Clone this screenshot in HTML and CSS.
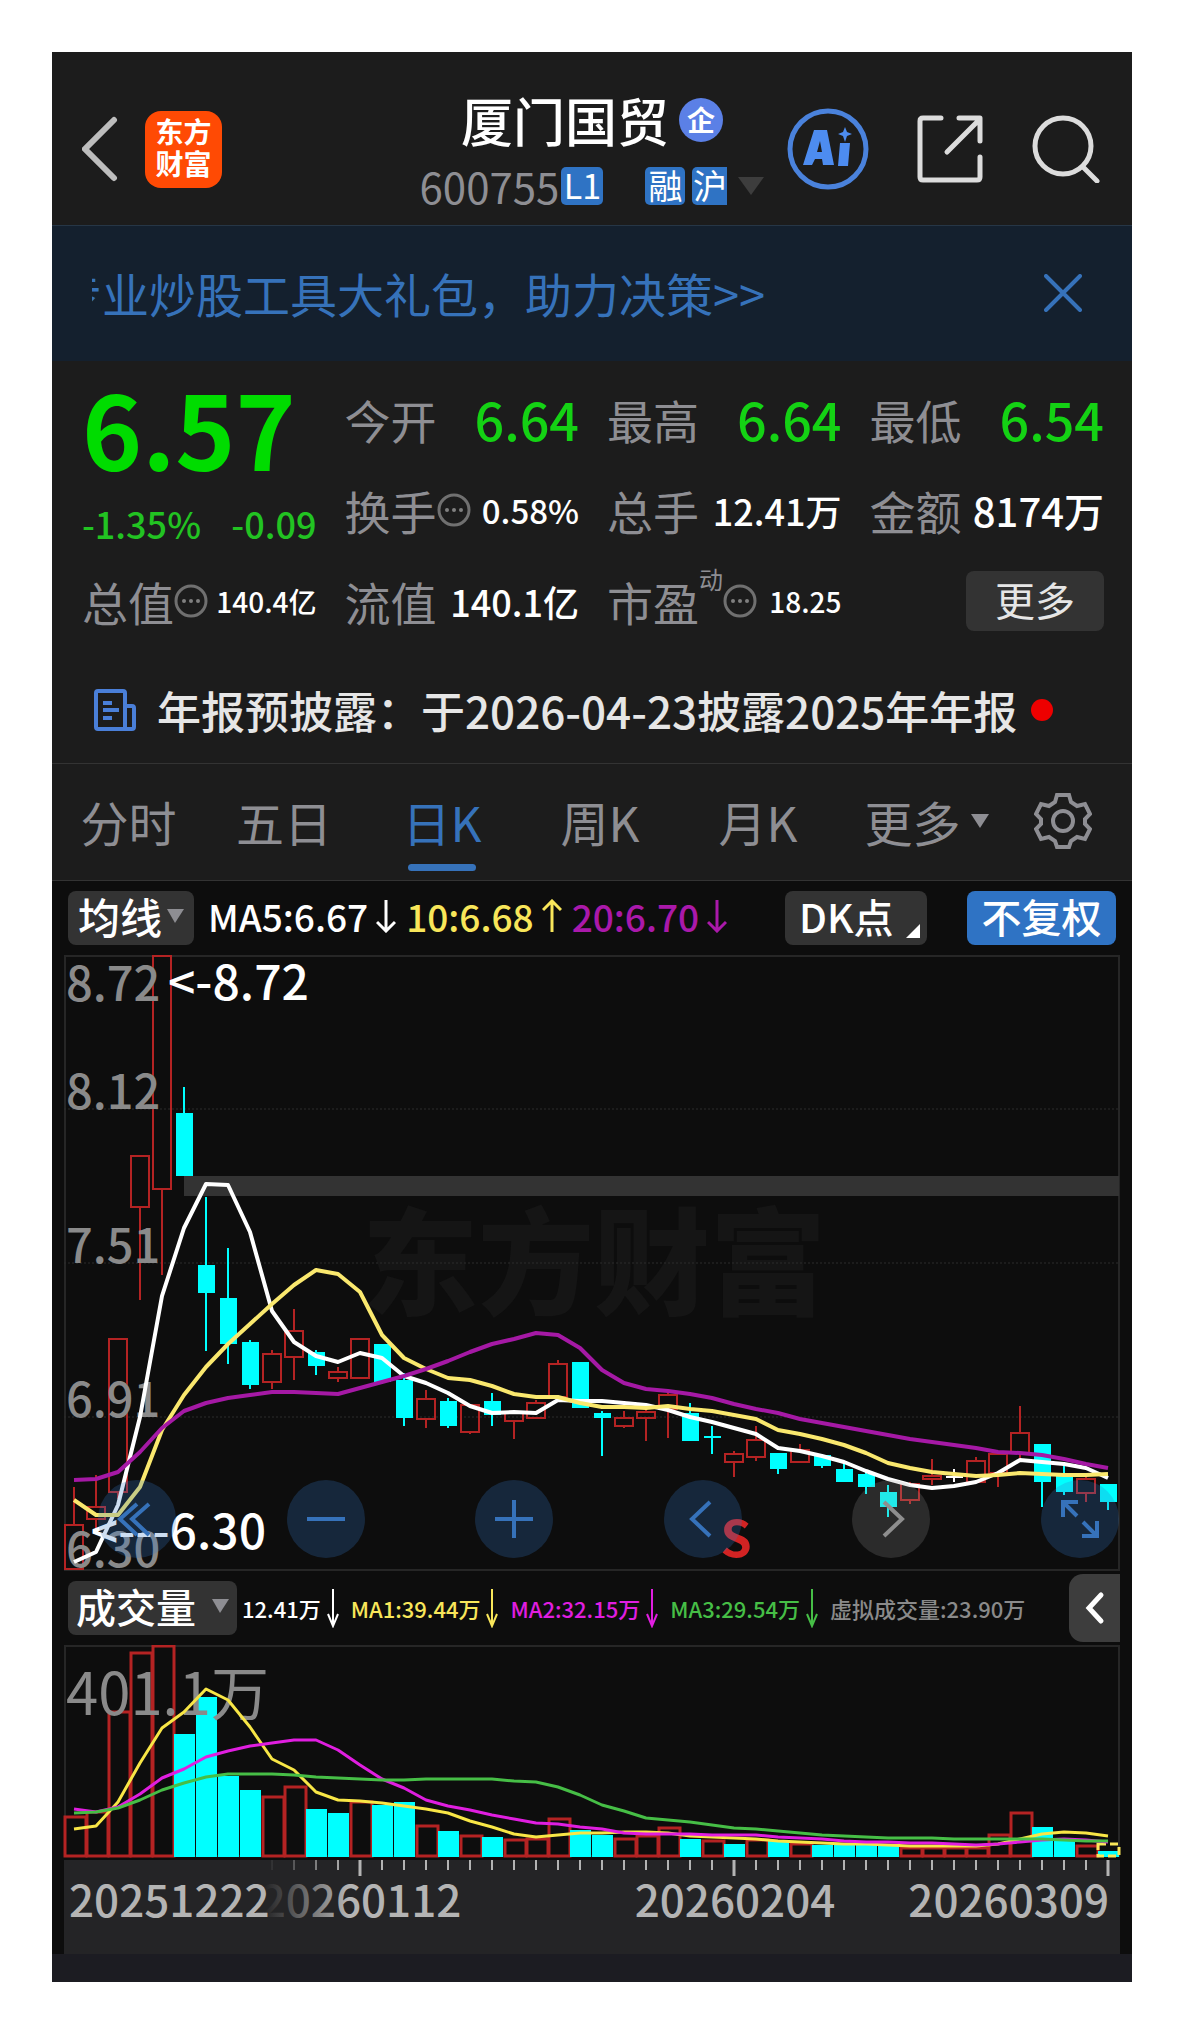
FILE: index.html
```html
<!DOCTYPE html>
<html lang="zh-CN">
<head>
    <meta charset="UTF-8">
    <meta name="viewport" content="width=device-width, initial-scale=1.0">
    <title>厦门国贸 600755</title>
    <link rel="stylesheet" href="styles.css">
</head>
<body>
    <main class="screen">
        <header class="header">
            <div class="header-left">
                <button class="icon-button" aria-label="返回">
                    <svg width="37" height="66" viewBox="3 0 37 66"><path d="M35 4 6 33l29 29" fill="none" stroke="#bdbdbd" stroke-width="6" stroke-linecap="round"/></svg>
                </button>
                <div class="logo"><span>东方</span><span>财富</span></div>
            </div>
            <div class="stock">
                <h1 class="stock-name">厦门国贸<span class="company-badge">企</span></h1>
                <div class="stock-meta">
                    <span class="stock-code">600755</span>
                    <span class="tag tag-level">L1</span>
                    <span class="tag">融</span>
                    <span class="tag tag-cut">沪</span>
                    <svg class="meta-caret" width="26" height="18" viewBox="0 0 26 18"><path d="M0 0h26L13 18z" fill="#3d3d3d"/></svg>
                </div>
            </div>
            <div class="header-actions">
                <button class="icon-button" aria-label="AI">
                    <svg width="82" height="82" viewBox="0 0 82 82">
                        <circle cx="41" cy="41" r="38" fill="none" stroke="#4a82dc" stroke-width="5"/>
                        <path fill="#4d8cf0" fill-rule="evenodd" d="M27 22h13l7 35H36l-1-6h-7l-3 6H16zM33 33l-3 11h5zM53 35h10l-2 23H51zM58 19l2 5 5 2-5 2-2 6-2-6-5-2 5-2z"/>
                    </svg>
                </button>
                <button class="icon-button" aria-label="分享">
                    <svg width="66" height="68" viewBox="0 0 66 68" fill="none" stroke="#dcdcdc" stroke-width="5" stroke-linecap="round" stroke-linejoin="round"><path d="M24 3H6q-3 0-3 3v56q0 3 3 3h54q3 0 3-3V42M42 3h21v23M62 5 30 37"/></svg>
                </button>
                <button class="icon-button" aria-label="搜索">
                    <svg width="71" height="68" viewBox="0 0 71 68" fill="none" stroke="#dcdcdc" stroke-width="5" stroke-linecap="round"><circle cx="32" cy="31" r="28"/><path d="m53 53 13 13"/></svg>
                </button>
            </div>
        </header>

        <div class="banner">
            <a class="banner-text" href="#">专业炒股工具大礼包，助力决策&gt;&gt;</a>
            <button class="icon-button" aria-label="关闭">
                <svg width="38" height="38" viewBox="0 0 38 38"><path d="m2 2 34 34M36 2 2 36" stroke="#3672ba" stroke-width="4" stroke-linecap="round"/></svg>
            </button>
        </div>

        <section class="quote">
            <div class="price">
                <div class="price-last">6.57</div>
                <div class="price-change"><span>-1.35%</span><span>-0.09</span></div>
            </div>
            <div class="cell"><span class="label">今开</span><span class="value value-large down">6.64</span></div>
            <div class="cell"><span class="label">最高</span><span class="value value-large down">6.64</span></div>
            <div class="cell"><span class="label">最低</span><span class="value value-large down">6.54</span></div>
            <div class="cell"><span class="label">换手</span><svg class="info" viewBox="0 0 34 34"><use href="#info-icon"/></svg><span class="value value-medium">0.58%</span></div>
            <div class="cell"><span class="label">总手</span><span class="value">12.41万</span></div>
            <div class="cell"><span class="label">金额</span><span class="value value-wide">8174万</span></div>
            <div class="cell"><span class="label">总值</span><svg class="info" viewBox="0 0 34 34"><use href="#info-icon"/></svg><span class="value value-small">140.4亿</span></div>
            <div class="cell"><span class="label">流值</span><span class="value">140.1亿</span></div>
            <div class="cell"><span class="label">市盈</span><span class="label-sup">动</span><svg class="info" viewBox="0 0 34 34"><use href="#info-icon"/></svg><span class="value value-small">18.25</span></div>
            <div class="cell"><button class="more-button">更多</button></div>
        </section>

        <a class="notice" href="#">
            <svg width="42" height="42" viewBox="0 0 42 42" fill="none" stroke="#4a7fd8" stroke-width="4" stroke-linejoin="round"><path d="M31 40H4q-2 0-2-2V4q0-2 2-2h25q2 0 2 2zM31 17h7q2 0 2 2v19q0 2-2 2h-7M9 14h9M9 21h16M9 29h9"/></svg>
            <span class="notice-text">年报预披露：于2026-04-23披露2025年年报</span>
            <span class="notice-dot"></span>
        </a>

        <nav class="tabs">
            <button class="tab">分时</button>
            <button class="tab">五日</button>
            <button class="tab active">日K</button>
            <button class="tab">周K</button>
            <button class="tab">月K</button>
            <button class="tab">更多<svg class="tab-caret" width="18" height="14" viewBox="0 0 18 14"><path d="M0 0h18L9 14z" fill="#8e8e93"/></svg></button>
            <button class="tab" aria-label="设置">
                <svg width="58" height="58" viewBox="0 0 58 58" fill="none" stroke="#8e8e93" stroke-width="4"><path d="M23 3h12l2 7 6 4 8-2 5 10-5 5v5l5 5-5 10-8-2-6 4-2 6H23l-2-6-6-4-8 2-5-10 5-5v-5l-5-5 5-10 8 2 6-4z"/><circle cx="29" cy="29" r="10"/></svg>
            </button>
        </nav>

        <section class="chart">
            <div class="indicator-bar">
                <button class="chip">均线<svg width="17" height="14" viewBox="0 0 17 14"><path d="M0 0h17L8 14z" fill="#8e8e93"/></svg></button>
                <div class="averages">
                    <span class="average">MA5:6.67<svg class="arrow" viewBox="0 0 20 34"><use href="#arrow-down"/></svg></span>
                    <span class="average yellow">10:6.68<svg class="arrow" viewBox="0 0 20 34"><use href="#arrow-up"/></svg></span>
                    <span class="average purple">20:6.70<svg class="arrow" viewBox="0 0 20 34"><use href="#arrow-down"/></svg></span>
                </div>
                <button class="chip chip-dk">DK点<svg class="chip-corner" width="14" height="14" viewBox="0 0 14 14"><path d="M14 0v14H0z" fill="#fff"/></svg></button>
                <button class="chip chip-blue">不复权</button>
            </div>

            <div class="price-area">
                <svg class="plot" id="price-chart" viewBox="52 955 1080 616"></svg>
                <div class="chart-controls">
                    <button class="round" aria-label="最早"><svg viewBox="0 0 78 78"><path d="M39 24 22 39l17 16M51 24 34 39l17 16"/></svg></button>
                    <button class="round" aria-label="缩小"><svg viewBox="0 0 78 78"><path d="M20 39h38"/></svg></button>
                    <button class="round" aria-label="放大"><svg viewBox="0 0 78 78"><path d="M20 39h38M39 20v38"/></svg></button>
                    <button class="round" aria-label="向左"><svg viewBox="0 0 78 78"><path d="M46 22 28 39l18 17"/></svg></button>
                    <button class="round round-off" aria-label="向右"><svg viewBox="0 0 78 78"><path d="m32 22 18 17-18 17"/></svg></button>
                    <button class="round" aria-label="全屏"><svg viewBox="0 0 78 78"><path d="M22 37V22h15M22 22l14 14M56 41v15H41M56 56 42 42"/></svg></button>
                </div>
            </div>

            <div class="indicator-bar volume-bar">
                <button class="chip chip-volume">成交量<svg width="17" height="14" viewBox="0 0 17 14"><path d="M0 0h17L8 14z" fill="#8e8e93"/></svg></button>
                <div class="volumes">
                    <span class="volume">12.41万<svg class="arrow-thin" viewBox="0 0 14 40"><use href="#arrow-thin"/></svg></span>
                    <span class="volume yellow">MA1:39.44万<svg class="arrow-thin" viewBox="0 0 14 40"><use href="#arrow-thin"/></svg></span>
                    <span class="volume magenta">MA2:32.15万<svg class="arrow-thin" viewBox="0 0 14 40"><use href="#arrow-thin"/></svg></span>
                    <span class="volume green">MA3:29.54万<svg class="arrow-thin" viewBox="0 0 14 40"><use href="#arrow-thin"/></svg></span>
                    <span class="volume grey">虚拟成交量:23.90万</span>
                </div>
                <button class="drawer" aria-label="展开"><svg width="20" height="34" viewBox="0 0 20 34"><path d="M16 4 4 17l12 13" fill="none" stroke="#fff" stroke-width="5" stroke-linecap="round"/></svg></button>
            </div>

            <svg class="plot" id="volume-chart" viewBox="52 1645 1080 215"></svg>
            <svg class="plot" id="date-axis" viewBox="52 1860 1080 94"></svg>
        </section>
        <div class="bottom-strip"></div>
    </main>

    <svg class="symbols" width="0" height="0" aria-hidden="true">
        <symbol id="info-icon" viewBox="0 0 34 34"><circle cx="17" cy="17" r="15" fill="none" stroke="#707070" stroke-width="3"/><g fill="#808080"><circle cx="10" cy="17" r="2"/><circle cx="17" cy="17" r="2"/><circle cx="24" cy="17" r="2"/></g></symbol>
        <symbol id="arrow-down" viewBox="0 0 20 34"><path d="M10 1v31M1 23l9 9 9-9" fill="none" stroke="currentColor" stroke-width="3"/></symbol>
        <symbol id="arrow-up" viewBox="0 0 20 34"><path d="M10 33V2M1 11l9-9 9 9" fill="none" stroke="currentColor" stroke-width="3"/></symbol>
        <symbol id="arrow-thin" viewBox="0 0 14 40"><path d="M7 1v37M2 26l5 12 5-12" fill="none" stroke="currentColor" stroke-width="2"/></symbol>
    </svg>

    <script src="chart.js"></script>
</body>
</html>
```

FILE: styles.css
```css
* {
    box-sizing: border-box;
}

body {
    margin: 0;
    padding: 52px;
    background: #fff;
    font-family: "Noto Sans CJK SC", "Noto Sans", sans-serif;
    color: #fff;
}

h1 {
    margin: 0;
    font-weight: 400;
}

a {
    color: inherit;
    text-decoration: none;
}

button {
    padding: 0;
    border: none;
    background: transparent;
    font-family: inherit;
    color: inherit;
    cursor: pointer;
}

svg {
    display: block;
    flex-shrink: 0;
}

.symbols {
    position: absolute;
}

.screen {
    background: #1c1c1c;
    overflow: hidden;
}

/* header */
.header {
    display: grid;
    grid-template-columns: 1fr auto 1fr;
    align-items: center;
    padding: 36px 30px 19px;
    border-bottom: 1px solid #263646;
}

.header-left {
    display: flex;
    align-items: center;
    gap: 26px;
    padding-top: 4px;
}

.logo {
    display: flex;
    flex-direction: column;
    align-items: center;
    justify-content: center;
    width: 77px;
    height: 77px;
    padding-bottom: 4px;
    border-radius: 16px;
    background: #ff4a04;
    font-size: 28px;
    font-weight: 700;
    line-height: 32px;
}

.stock {
    display: flex;
    flex-direction: column;
    align-items: center;
    gap: 14px;
}

.stock-name {
    display: flex;
    align-items: center;
    gap: 10px;
    font-size: 52px;
    font-weight: 500;
    line-height: 64px;
}

.company-badge {
    width: 44px;
    height: 44px;
    border-radius: 50%;
    background: #5b80e6;
    font-size: 28px;
    font-weight: 700;
    line-height: 42px;
    text-align: center;
}

.stock-meta {
    display: flex;
    align-items: center;
    height: 40px;
}

.stock-code {
    color: #8e8e93;
    font-size: 42px;
    line-height: 40px;
}

.tag {
    width: 40px;
    height: 38px;
    margin-right: 7px;
    border-radius: 5px;
    background: #2f73c4;
    font-size: 34px;
    line-height: 36px;
    text-align: center;
}

.tag-level {
    width: 42px;
    margin-right: 42px;
    margin-left: 2px;
}

.tag-cut {
    width: 35px;
    border-radius: 5px 0 0 5px;
}

.meta-caret {
    margin-left: 4px;
}

.header-actions {
    display: flex;
    align-items: center;
    justify-content: flex-end;
    gap: 48px;
    padding-top: 4px;
}

/* banner */
.banner {
    display: flex;
    align-items: center;
    justify-content: space-between;
    height: 135px;
    padding: 0 50px 2px 40px;
    background: #14202e;
}

.banner-text {
    color: #3672ba;
    font-size: 47px;
    line-height: 68px;
    text-indent: -37px;
    white-space: nowrap;
    overflow: hidden;
}

/* quote */
.quote {
    display: grid;
    grid-template-columns: repeat(4, 1fr);
    grid-auto-rows: 91px;
    column-gap: 28px;
    padding: 12px 28px 1px 30px;
}

.price {
    grid-row: span 2;
    color: #00dc00;
    font-weight: 500;
}

.price-last {
    font-size: 102px;
    font-weight: 700;
    line-height: 108px;
}

.price-change {
    display: flex;
    justify-content: space-between;
    color: #22c322;
    font-size: 36px;
    line-height: 84px;
}

.cell {
    display: flex;
    align-items: center;
    white-space: nowrap;
}

.label {
    color: #8e8e93;
    font-size: 46px;
}

.label-sup {
    align-self: flex-start;
    color: #8e8e93;
    font-size: 24px;
    line-height: 48px;
}

.info {
    width: 34px;
    height: 34px;
}

.value {
    margin-left: auto;
    font-size: 36px;
    font-weight: 500;
}

.value-large {
    font-size: 52px;
}

.value-wide {
    font-size: 40px;
}

.value-medium {
    font-size: 33px;
}

.value-small {
    font-size: 28px;
}

.down {
    color: #14d214;
}

.more-button {
    width: 138px;
    height: 60px;
    margin-left: auto;
    padding-bottom: 4px;
    border-radius: 8px;
    background: #333;
    color: #e6e6e6;
    font-size: 40px;
    line-height: 52px;
}

.notice {
    display: flex;
    align-items: center;
    height: 117px;
    padding: 10px 42px 0;
    border-bottom: 1px solid #333;
    color: #e6e6e6;
    font-size: 44px;
}

.notice-text {
    margin: 0 14px 0 21px;
    font-weight: 500;
    white-space: nowrap;
}

.notice-dot {
    width: 22px;
    height: 22px;
    border-radius: 50%;
    background: #ee0000;
}

/* tabs */
.tabs {
    display: grid;
    grid-template-columns: 153fr repeat(4, 158fr) 179fr 94fr;
    height: 117px;
    padding-right: 22px;
    border-bottom: 1px solid #333;
}

.tab {
    position: relative;
    display: flex;
    align-items: center;
    justify-content: center;
    padding-bottom: 3px;
    color: #8e8e93;
    font-size: 48px;
}

.tab.active {
    color: #3672ba;
}

.tab.active::after {
    content: "";
    position: absolute;
    bottom: 9px;
    left: calc(50% - 34px);
    width: 68px;
    height: 7px;
    border-radius: 4px;
    background: #3672ba;
}

.tab-caret {
    margin-left: 10px;
}

/* chart */
.chart {
    background: #0d0d0d;
}

.indicator-bar {
    display: flex;
    align-items: center;
    height: 74px;
    padding: 0 16px;
}

.chip {
    display: flex;
    align-items: center;
    justify-content: center;
    gap: 5px;
    width: 126px;
    height: 54px;
    padding-bottom: 4px;
    border-radius: 8px;
    background: #333;
    font-size: 42px;
    font-weight: 500;
    line-height: 50px;
    white-space: nowrap;
    flex-shrink: 0;
}

.averages {
    display: flex;
    gap: 10px;
    margin: 0 auto 0 14px;
    padding-bottom: 4px;
    font-size: 37px;
    font-weight: 500;
    white-space: nowrap;
}

.average,
.volume {
    display: flex;
    align-items: center;
    gap: 8px;
}

.arrow {
    width: 20px;
    height: 34px;
}

.yellow {
    color: #f8e65a;
}

.purple {
    color: #aa19aa;
}

.magenta {
    color: #e01ee0;
}

.green {
    color: #46be46;
}

.grey {
    color: #8a8a8a;
}

.chip-dk {
    position: relative;
    justify-content: flex-start;
    width: 142px;
    margin-right: 40px;
    padding-left: 14px;
    font-size: 40px;
}

.chip-corner {
    position: absolute;
    right: 7px;
    bottom: 7px;
}

.chip-blue {
    width: 149px;
    background: #2f73c4;
    font-size: 40px;
}

.plot {
    width: 100%;
    height: auto;
}

.price-area {
    position: relative;
}

.chart-controls {
    position: absolute;
    right: 13px;
    bottom: 13px;
    left: 46px;
    display: flex;
    justify-content: space-between;
}

.round {
    width: 78px;
    height: 78px;
    border-radius: 50%;
    background: rgba(50, 120, 200, 0.25);
}

.round path {
    fill: none;
    stroke: #3672ba;
    stroke-width: 4;
}

.round-off {
    background: rgba(150, 150, 150, 0.22);
}

.round-off path {
    stroke: #8e8e8e;
}

.volume-bar {
    padding-right: 12px;
}

.chip-volume {
    gap: 16px;
    width: 169px;
    font-size: 40px;
}

.volumes {
    display: flex;
    gap: 11px;
    margin: 0 auto 0 5px;
    font-size: 22px;
    font-weight: 500;
    white-space: nowrap;
}

.volume {
    gap: 5px;
}

.arrow-thin {
    width: 14px;
    height: 40px;
}

.drawer {
    display: flex;
    align-items: center;
    justify-content: center;
    width: 51px;
    height: 68px;
    border-radius: 14px 0 0 14px;
    background: #3d3d3d;
}

.bottom-strip {
    height: 28px;
    background: #1c1c22;
}

/* plot parts */
.frame {
    fill: none;
    stroke: #262626;
    stroke-width: 2;
}

.grid-line {
    stroke: #2c2c2c;
    stroke-width: 1;
    stroke-dasharray: 2 2;
}

.up {
    fill: none;
    stroke: #b42323;
    stroke-width: 2;
}

.volume-up {
    fill: none;
    stroke: #b42323;
    stroke-width: 3;
}

.wick {
    stroke-width: 2;
}

.line {
    fill: none;
    stroke-width: 3;
    stroke-linejoin: round;
}

.price-line {
    stroke-width: 4;
}

.axis-label {
    fill: #8a8a8a;
    font-size: 47px;
    font-weight: 500;
}

.mark {
    fill: #fff;
    font-size: 48px;
    font-weight: 500;
}

.volume-label {
    fill: #8a8a8a;
    font-size: 58px;
}

.sell {
    fill: #d22323;
    font-size: 50px;
    font-weight: 700;
}

.watermark {
    fill: #151515;
    font-size: 116px;
    font-weight: 900;
}

.date {
    fill: #b4b4b4;
    font-size: 44px;
    font-weight: 500;
}
```

FILE: chart.js
```js
const CYAN = '#00ffff';
const RED = '#b42323';
const LEFT = 64;
const RIGHT = 1119;
const STEP = 22;

// [type, high, body top, body bottom, low]: r = up, c = down, w = flat
const candles = [
    ['r', 1487, 1525, 1569, 1570], ['r', 1475, 1507, 1519, 1532], ['r', 1339, 1339, 1492, 1499],
    ['r', 1156, 1156, 1207, 1300], ['r', 956, 956, 1189, 1275], ['c', 1087, 1113, 1176, 1176],
    ['c', 1197, 1265, 1293, 1351], ['c', 1248, 1298, 1344, 1364], ['c', 1340, 1342, 1385, 1389],
    ['r', 1350, 1354, 1382, 1389], ['r', 1309, 1331, 1357, 1380], ['c', 1350, 1352, 1366, 1375],
    ['r', 1367, 1372, 1378, 1382], ['r', 1339, 1339, 1378, 1379], ['c', 1344, 1344, 1382, 1384],
    ['c', 1373, 1380, 1418, 1426], ['r', 1390, 1399, 1419, 1428], ['c', 1398, 1401, 1426, 1428],
    ['r', 1405, 1405, 1432, 1434], ['c', 1393, 1401, 1415, 1426], ['r', 1413, 1413, 1421, 1439],
    ['r', 1400, 1403, 1418, 1418], ['r', 1360, 1364, 1397, 1397], ['c', 1362, 1362, 1408, 1408],
    ['c', 1411, 1413, 1418, 1456], ['r', 1411, 1418, 1426, 1428], ['r', 1409, 1412, 1418, 1441],
    ['r', 1393, 1395, 1409, 1438], ['c', 1403, 1413, 1441, 1441], ['c', 1426, 1436, 1438, 1454],
    ['r', 1451, 1454, 1462, 1477], ['r', 1426, 1440, 1457, 1461], ['c', 1453, 1453, 1469, 1474],
    ['r', 1444, 1450, 1462, 1462], ['c', 1454, 1455, 1466, 1468], ['c', 1463, 1469, 1482, 1482],
    ['c', 1472, 1474, 1487, 1494], ['c', 1485, 1492, 1507, 1517], ['r', 1482, 1484, 1500, 1504],
    ['r', 1459, 1476, 1479, 1485], ['w', 1469, 1476, 1478, 1482], ['r', 1457, 1461, 1482, 1482],
    ['r', 1454, 1454, 1473, 1487], ['r', 1406, 1433, 1453, 1458], ['c', 1444, 1444, 1482, 1507],
    ['c', 1466, 1475, 1492, 1495], ['r', 1477, 1479, 1493, 1502], ['c', 1484, 1484, 1502, 1510]
];

const ma5 = [1562, 1552, 1505, 1417, 1296, 1228, 1184, 1185, 1232, 1311, 1342, 1356, 1362, 1353, 1358, 1376, 1383, 1393, 1406, 1413, 1412, 1413, 1400, 1401, 1401, 1403, 1405, 1410, 1417, 1422, 1428, 1434, 1448, 1451, 1456, 1462, 1471, 1479, 1485, 1488, 1486, 1482, 1473, 1460, 1462, 1464, 1468, 1478];
const ma10 = [1500, 1515, 1515, 1487, 1430, 1395, 1367, 1344, 1324, 1304, 1285, 1270, 1274, 1292, 1335, 1358, 1369, 1378, 1380, 1386, 1394, 1397, 1397, 1403, 1407, 1407, 1408, 1406, 1409, 1411, 1415, 1419, 1430, 1434, 1439, 1445, 1453, 1463, 1468, 1472, 1474, 1476, 1475, 1473, 1474, 1475, 1475, 1474];
const ma20 = [1480, 1479, 1472, 1452, 1428, 1411, 1403, 1398, 1395, 1392, 1392, 1393, 1394, 1388, 1382, 1376, 1369, 1361, 1352, 1344, 1339, 1333, 1335, 1348, 1370, 1383, 1389, 1391, 1394, 1398, 1404, 1409, 1413, 1419, 1423, 1427, 1431, 1435, 1439, 1442, 1445, 1448, 1452, 1453, 1455, 1459, 1464, 1468];

const volumeTypes = 'rrrrrccccrrccrccrcrcrrrccrrrcrcrcrccccrrrrrrccrc';
const volumeTops = [1817, 1812, 1712, 1653, 1646, 1734, 1697, 1776, 1790, 1797, 1787, 1809, 1813, 1802, 1805, 1802, 1826, 1831, 1836, 1837, 1840, 1839, 1819, 1830, 1835, 1839, 1836, 1828, 1839, 1841, 1844, 1840, 1841, 1844, 1845, 1845, 1845, 1846, 1848, 1848, 1848, 1848, 1835, 1813, 1827, 1841, 1846, 1851];
const vol1 = [1829, 1826, 1802, 1763, 1728, 1712, 1689, 1700, 1727, 1759, 1770, 1792, 1800, 1801, 1803, 1806, 1809, 1813, 1821, 1827, 1834, 1837, 1835, 1833, 1833, 1832, 1832, 1833, 1836, 1837, 1838, 1839, 1841, 1842, 1843, 1844, 1844, 1845, 1846, 1846, 1846, 1846, 1844, 1839, 1834, 1832, 1833, 1836];
const vol2 = [1809, 1812, 1807, 1794, 1778, 1769, 1757, 1751, 1746, 1743, 1740, 1740, 1750, 1765, 1779, 1788, 1800, 1806, 1810, 1815, 1819, 1823, 1824, 1827, 1829, 1833, 1834, 1834, 1834, 1835, 1835, 1835, 1837, 1838, 1839, 1841, 1842, 1842, 1843, 1843, 1844, 1845, 1844, 1842, 1840, 1839, 1840, 1842];
const vol3 = [1813, 1812, 1808, 1800, 1790, 1783, 1777, 1774, 1774, 1774, 1775, 1777, 1778, 1779, 1780, 1780, 1779, 1779, 1779, 1779, 1781, 1782, 1787, 1795, 1805, 1811, 1818, 1820, 1822, 1825, 1828, 1829, 1831, 1833, 1835, 1836, 1837, 1838, 1838, 1838, 1839, 1839, 1839, 1839, 1839, 1840, 1841, 1841];

const center = i => 74 + STEP * i;

function rect(x, y, w, h, attrs) {
    return `<rect x="${x}" y="${y}" width="${w}" height="${h}" ${attrs}/>`;
}

function line(x1, y1, x2, y2, attrs) {
    return `<line x1="${x1}" y1="${y1}" x2="${x2}" y2="${y2}" ${attrs}/>`;
}

function text(x, y, cls, content, anchor = 'start') {
    return `<text x="${x}" y="${y}" class="${cls}" text-anchor="${anchor}">${content}</text>`;
}

function average(values, color, cls = 'line') {
    const points = values.map((y, i) => `${center(i)},${y}`).join(' ');
    return `<polyline class="${cls}" points="${points}" stroke="${color}"/>`;
}

function candle([type, high, top, bottom, low], i) {
    const x = center(i);
    const color = { r: RED, c: CYAN, w: '#ffffff' }[type];
    let out = '';
    if (high < top) out += line(x, high, x, top, `class="wick" stroke="${color}"`);
    if (low > bottom) out += line(x, bottom, x, low, `class="wick" stroke="${color}"`);
    if (type === 'r') {
        out += rect(x - 9, top, 18, bottom - top, 'class="up"');
    } else {
        out += rect(x - 8, top, 17, bottom - top, `fill="${color}"`);
    }
    return out;
}

function drawPrice() {
    let out = text(594, 1306, 'watermark', '东方财富', 'middle');
    out += rect(LEFT + 1, 956, RIGHT - LEFT - 1, 614, 'class="frame"');
    [1109, 1263, 1417].forEach(y => { out += line(LEFT, y, RIGHT, y, 'class="grid-line"'); });
    out += rect(184, 1176, RIGHT - 184, 20, 'fill="#333"');
    out += candles.map(candle).join('');
    [[1001, '8.72'], [1109, '8.12'], [1263, '7.51'], [1417, '6.91'], [1567, '6.30']].forEach(([y, label]) => {
        out += text(66, y, 'axis-label', label);
    });
    out += average(ma5, '#ffffff', 'line price-line') + average(ma10, '#fae86e', 'line price-line') + average(ma20, '#a519a5', 'line price-line');
    out += text(168, 1000, 'mark', '&lt;-8.72');
    out += text(266, 1549, 'mark', '&lt;---6.30', 'end');
    out += text(736, 1557, 'sell', 'S', 'middle');
    document.getElementById('price-chart').innerHTML = out;
}

function drawVolume() {
    let out = rect(LEFT + 1, 1646, RIGHT - LEFT - 1, 210, 'class="frame"');
    volumeTops.forEach((top, i) => {
        const x = LEFT + STEP * i;
        if (volumeTypes[i] === 'r') {
            out += rect(x + 1, top, STEP - 1, 1856 - top, 'class="volume-up"');
        } else {
            out += rect(x, top, STEP - 1, 1857 - top, `fill="${CYAN}"`);
        }
    });
    // projected volume of the running day
    out += rect(1098, 1844, 21, 12, 'fill="none" stroke="#f8e65a" stroke-width="3" stroke-dasharray="8 4"');
    out += text(66, 1715, 'volume-label', '401.1万');
    out += average(vol1, '#f8e646') + average(vol2, '#e01ee0') + average(vol3, '#46be46');
    document.getElementById('volume-chart').innerHTML = out;
}

function drawDates() {
    let out = '<defs><linearGradient id="fade"><stop offset="0" stop-color="#242426"/><stop offset="1" stop-color="#242426" stop-opacity="0"/></linearGradient></defs>';
    out += rect(LEFT, 1860, 1056, 94, 'fill="#242426"');
    for (let i = 9; i < 48; i++) {
        const long = i === 13 || i === 30 || i === 47;
        out += line(center(i), 1860, center(i), long ? 1876 : 1870, `stroke="#b4b4b4" stroke-width="${long ? 3 : 2}"`);
    }
    out += text(361, 1917, 'date', '20260112', 'middle');
    out += rect(264, 1860, 84, 90, 'fill="url(#fade)"');
    out += text(69, 1917, 'date', '20251222');
    out += text(735, 1917, 'date', '20260204', 'middle');
    out += text(1109, 1917, 'date', '20260309', 'end');
    document.getElementById('date-axis').innerHTML = out;
}

drawPrice();
drawVolume();
drawDates();
```
